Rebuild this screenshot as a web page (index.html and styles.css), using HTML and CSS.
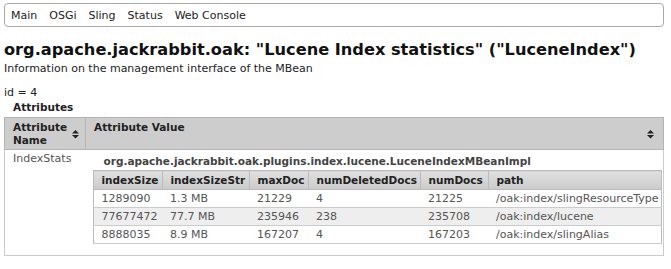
FILE: index.html
```html
<!DOCTYPE html>
<html lang="en">
<head>
    <meta charset="UTF-8"/>
    <title>JMX</title>
    <link rel="stylesheet" href="styles.css">
</head>
<body>
<div id="navbar">
    <a href="#">Main</a>
    <a href="#">OSGi</a>
    <a href="#">Sling</a>
    <a href="#">Status</a>
    <a href="#">Web Console</a>
</div>

<h1 class="title">org.apache.jackrabbit.oak: "Lucene Index statistics" ("LuceneIndex")</h1>
<p class="subtitle">Information on the management interface of the MBean</p>

<p class="bean-id">id = 4</p>
<div class="section-title">Attributes</div>

<table class="attributes">
    <thead>
    <tr>
        <th class="name-col">
            Attribute<br>Name
            <svg class="sort" width="7" height="9" viewBox="0 0 7 9"><polygon points="3.5,0 7,3.5 0,3.5"/><polygon points="0,5 7,5 3.5,8.5"/></svg>
        </th>
        <th>
            Attribute Value
            <svg class="sort" width="7" height="9" viewBox="0 0 7 9"><polygon points="3.5,0 7,3.5 0,3.5"/><polygon points="0,5 7,5 3.5,8.5"/></svg>
        </th>
    </tr>
    </thead>
    <tbody>
    <tr>
        <td class="attr-name">IndexStats</td>
        <td class="attr-value">
            <div class="type-name">org.apache.jackrabbit.oak.plugins.index.lucene.LuceneIndexMBeanImpl</div>
            <table class="stats">
                <thead>
                <tr>
                    <th class="c1">indexSize</th>
                    <th class="c2">indexSizeStr</th>
                    <th class="c3">maxDoc</th>
                    <th class="c4">numDeletedDocs</th>
                    <th class="c5">numDocs</th>
                    <th>path</th>
                </tr>
                </thead>
                <tbody>
                <tr>
                    <td>1289090</td><td>1.3 MB</td><td>21229</td><td>4</td><td>21225</td><td>/oak:index/slingResourceType</td>
                </tr>
                <tr class="odd">
                    <td>77677472</td><td>77.7 MB</td><td>235946</td><td>238</td><td>235708</td><td>/oak:index/lucene</td>
                </tr>
                <tr>
                    <td>8888035</td><td>8.9 MB</td><td>167207</td><td>4</td><td>167203</td><td>/oak:index/slingAlias</td>
                </tr>
                </tbody>
            </table>
        </td>
    </tr>
    </tbody>
</table>
</body>
</html>
```

FILE: styles.css
```css
body {
    margin: 0;
    padding: 3px 7px 0 4px;
    font-family: "DejaVu Sans", Verdana, sans-serif;
    font-size: 11px;
    color: #222;
    background: #fff;
}

#navbar {
    height: 22px;
    border: 1px solid #aaa;
    border-radius: 4px;
    display: flex;
    align-items: center;
    gap: 12px;
    padding: 0 6px;
}

#navbar a {
    color: #222;
    text-decoration: none;
}

.title {
    margin: 13px 0 0;
    font-size: 16.2px;
    font-weight: bold;
    color: #111;
    line-height: 19px;
}

.subtitle {
    margin: 3px 0 0;
    line-height: 13px;
}

.bean-id {
    margin: 11px 0 0;
    line-height: 13px;
}

.section-title {
    font-weight: bold;
    font-size: 10.5px;
    padding-left: 9px;
    margin-top: 2px;
    line-height: 13px;
}

.attributes {
    margin-top: 3px;
    width: 100%;
    border-collapse: collapse;
    border: 1px solid #ccc;
    table-layout: fixed;
}

.attributes > thead th {
    position: relative;
    box-sizing: border-box;
    background: #cdcdcd;
    border: 1px solid #b4b4b4;
    text-align: left;
    padding: 3px 20px 2px 8px;
    vertical-align: top;
    font-size: 10.5px;
    line-height: 13px;
    color: #222;
}

.attributes .name-col {
    width: 81px;
}

.sort {
    position: absolute;
    right: 9px;
    top: 50%;
    margin-top: -4px;
    fill: #222;
}

.attributes .name-col .sort {
    right: 6px;
}

.attributes > tbody > tr > td {
    vertical-align: top;
    padding: 2px 1px 11px 8px;
    line-height: 13px;
    color: #555;
}

.attributes .attr-value {
    padding-left: 7px;
}

.type-name {
    font-weight: bold;
    font-size: 10.5px;
    color: #444;
    padding-left: 11px;
    margin: 3px 0 2px;
    white-space: nowrap;
}

.stats {
    width: 100%;
    border-collapse: collapse;
    border: 1px solid #bbb;
    table-layout: fixed;
}

.stats th {
    box-sizing: border-box;
    background: linear-gradient(#e0e0e0, #cbcbcb);
    border: 1px solid #bbb;
    text-align: left;
    padding: 0 8px;
    height: 19px;
    font-size: 10.5px;
    color: #222;
    white-space: nowrap;
}

.stats td {
    padding: 0 8px;
    height: 17px;
    color: #555;
    border-bottom: 1px solid #ccc;
    white-space: nowrap;
}

.stats tr.odd td {
    background: #eee;
}

.stats .c1 { width: 69px; }
.stats .c2 { width: 87px; }
.stats .c3 { width: 59px; }
.stats .c4 { width: 112px; }
.stats .c5 { width: 68px; }
```
